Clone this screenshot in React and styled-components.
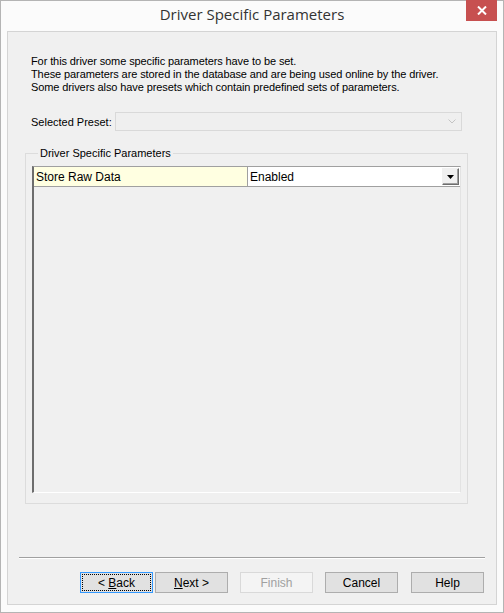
import React from 'react';
import styled, { createGlobalStyle } from 'styled-components';

const GlobalStyle = createGlobalStyle`
  html, body {
    margin: 0;
    padding: 0;
    background: #ffffff;
  }
`;

const Window = styled.div`
  box-sizing: border-box;
  width: 504px;
  height: 613px;
  border: 1px solid #b4b4b4;
  background: #fbfbfb;
  display: flex;
  flex-direction: column;
  padding: 0 6px 7px 6px;
  font-family: "Liberation Sans", Arial, sans-serif;
`;

const TitleBar = styled.div`
  position: relative;
  height: 30px;
  flex: none;
  display: flex;
  align-items: center;
  justify-content: center;
  font-family: "Open Sans", "Noto Sans", sans-serif;
  font-size: 15px;
  color: #333333;
  padding-bottom: 4px;
  box-sizing: border-box;
`;

const CloseButton = styled.div`
  position: absolute;
  right: 0;
  top: -1px;
  width: 31px;
  height: 21px;
  background: #c75050;
  display: flex;
  align-items: center;
  justify-content: center;
`;

const Content = styled.div`
  flex: 1;
  box-sizing: border-box;
  border: 1px solid #d4d4d4;
  background: #f0f0f0;
  display: flex;
  flex-direction: column;
  padding: 23px 11px 11px 11px;
  font-size: 11px;
  color: #000000;
`;

const Intro = styled.p`
  margin: 0 0 0 12px;
  line-height: 13px;
  letter-spacing: -0.1px;
`;

const PresetRow = styled.div`
  display: flex;
  align-items: center;
  margin: 18px 0 0 12px;
`;

const Label = styled.span`
  flex: none;
  width: 84px;
  white-space: nowrap;
`;

const Combo = styled.div`
  box-sizing: border-box;
  width: 347px;
  height: 19px;
  border: 1px solid #d9d9d9;
  background: #efefef;
  display: flex;
  align-items: center;
  justify-content: flex-end;
  padding-right: 5px;
`;

const Group = styled.fieldset`
  box-sizing: border-box;
  margin: 16px 17px 0 6px;
  padding: 8px 6px 10px 6px;
  border: 1px solid #dcdcdc;
  min-width: 0;
`;

const Legend = styled.legend`
  padding: 0 2px;
  margin-left: 6px;
  font-size: 11px;
`;

const Grid = styled.div`
  box-sizing: border-box;
  height: 327px;
  border-left: 2px solid #6d6d6d;
  border-top: 1px solid #a0a0a0;
  border-right: 1px solid #e3e3e3;
  border-bottom: 1px solid #ffffff;
  margin-top: -1px;
`;

const Row = styled.div`
  display: flex;
  height: 19px;
  border-bottom: 1px solid #a0a0a0;
`;

const Cell = styled.div`
  display: flex;
  align-items: center;
  box-sizing: border-box;
  padding-left: 2px;
  font-size: 12px;
  background: ${p => (p.$key ? '#ffffe1' : '#ffffff')};
  width: ${p => (p.$key ? '214px' : 'auto')};
  flex: ${p => (p.$key ? 'none' : '1')};
  border-right: ${p => (p.$key ? '1px solid #a0a0a0' : 'none')};
  position: relative;
`;

const DropButton = styled.div`
  position: absolute;
  right: 1px;
  top: 1px;
  width: 17px;
  height: 17px;
  box-sizing: border-box;
  border: 1px solid #6d6d6d;
  border-top-color: #f0f0f0;
  border-left-color: #f0f0f0;
  box-shadow: inset -1px -1px 0 #a0a0a0;
  background: #f0f0f0;
  display: flex;
  align-items: center;
  justify-content: center;
`;

const Spacer = styled.div`
  flex: 1;
`;

const Separator = styled.div`
  height: 1px;
  background: #a0a0a0;
  border-bottom: 1px solid #ffffff;
  margin: 0 0 13px 0;
`;

const ButtonBar = styled.div`
  display: flex;
  justify-content: flex-end;
  padding-right: 1px;
`;

const Button = styled.div`
  box-sizing: border-box;
  width: 73px;
  height: 21px;
  border: 1px solid ${p => (p.$focus ? '#3399ff' : p.$disabled ? '#d9d9d9' : '#adadad')};
  background: ${p => (p.$disabled ? '#f4f4f4' : '#e1e1e1')};
  color: ${p => (p.$disabled ? '#a0a0a0' : '#000000')};
  display: flex;
  align-items: center;
  justify-content: center;
  font-size: 12px;
  margin-left: ${p => p.$gap || 0}px;
  position: relative;
  padding-top: 1px;
  white-space: pre;

  &::after {
    content: '';
    display: ${p => (p.$focus ? 'block' : 'none')};
    position: absolute;
    inset: 1px;
    border: 1px dotted #000000;
  }

  u {
    text-decoration: underline;
    text-underline-offset: 1px;
  }
`;

const App = () => (
  <>
    <GlobalStyle />
    <Window>
      <TitleBar>
        Driver Specific Parameters
        <CloseButton>
          <svg width="10" height="9" viewBox="0 0 10 9">
            <path d="M1 0.5 L9 8.5 M9 0.5 L1 8.5" stroke="#ffffff" strokeWidth="2" />
          </svg>
        </CloseButton>
      </TitleBar>
      <Content>
        <Intro>
          For this driver some specific parameters have to be set.
          <br />
          These parameters are stored in the database and are being used online by the driver.
          <br />
          Some drivers also have presets which contain predefined sets of parameters.
        </Intro>
        <PresetRow>
          <Label>Selected Preset:</Label>
          <Combo>
            <svg width="8" height="5" viewBox="0 0 8 5">
              <path d="M0.5 0.5 L4 4 L7.5 0.5" stroke="#c4c4c4" fill="none" strokeWidth="1" />
            </svg>
          </Combo>
        </PresetRow>
        <Group>
          <Legend>Driver Specific Parameters</Legend>
          <Grid>
            <Row>
              <Cell $key>Store Raw Data</Cell>
              <Cell>
                Enabled
                <DropButton>
                  <svg width="7" height="4" viewBox="0 0 7 4">
                    <path d="M0 0 L7 0 L3.5 4 Z" fill="#000000" />
                  </svg>
                </DropButton>
              </Cell>
            </Row>
          </Grid>
        </Group>
        <Spacer />
        <Separator />
        <ButtonBar>
          <Button $focus>{'< '}<u>B</u>ack</Button>
          <Button $gap={2}><u>N</u>ext {'>'}</Button>
          <Button $gap={12} $disabled>Finish</Button>
          <Button $gap={12}>Cancel</Button>
          <Button $gap={13}>Help</Button>
        </ButtonBar>
      </Content>
    </Window>
  </>
);

export default App;
